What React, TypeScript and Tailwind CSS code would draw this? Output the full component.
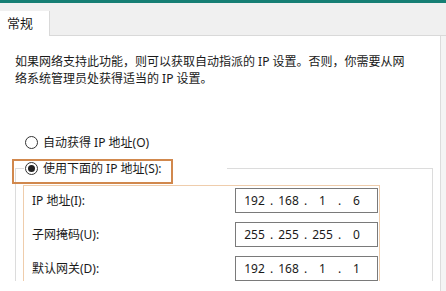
import React from "react";

const FONT = { fontFamily: '"Noto Sans", "Noto Sans CJK SC", sans-serif' };

function Radio({ checked }: { checked?: boolean }) {
  return (
    <span className="flex h-[13px] w-[13px] shrink-0 items-center justify-center rounded-full border border-[#333333] bg-white">
      {checked && <span className="h-[7px] w-[7px] rounded-full bg-[#222222]" />}
    </span>
  );
}

function IpBox({ parts }: { parts: string[] }) {
  return (
    <div className="flex h-[25px] w-[143px] items-center border border-[#7a7a7a] bg-white pl-[5px] text-[12px] text-[#1a1a1a]">
      {parts.map((p, i) => (
        <React.Fragment key={i}>
          <span className="w-[27px] text-center">{p}</span>
          {i < 3 && <span className="w-[7px] text-center">.</span>}
        </React.Fragment>
      ))}
    </div>
  );
}

const rows = [
  { label: "IP 地址(I):", parts: ["192", "168", "1", "6"] },
  { label: "子网掩码(U):", parts: ["255", "255", "255", "0"] },
  { label: "默认网关(D):", parts: ["192", "168", "1", "1"] },
];

export default function App() {
  return (
    <div className="h-[291px] w-[446px] overflow-hidden bg-[#f4f4f4] text-[#1a1a1a]" style={FONT}>
      {/* title bar edge */}
      <div className="h-[3px] bg-[#167f74]" />

      {/* tab strip */}
      <div className="flex h-[33px] items-end border-b border-[#d9d9d9] bg-[#f0f0f0]">
        <div className="-mb-px flex h-[25px] w-[50px] items-center border-r border-[#d9d9d9] bg-white pl-[7px] text-[13px]">
          常规
        </div>
      </div>

      <div className="flex">
        <div className="h-[260px] w-[441px] border-r border-[#dcdcdc] bg-white">
          <p className="whitespace-nowrap pl-[15px] pt-[17px] text-[12px] leading-[17px]">
            如果网络支持此功能，则可以获取自动指派的 IP 设置。否则，你需要从网
            <br />
            络系统管理员处获得适当的 IP 设置。
          </p>

          <div className="mt-[47px] flex h-[17px] items-center gap-[5px] pl-[25px] text-[12px]">
            <Radio />
            <span>自动获得 IP 地址(O)</span>
          </div>

          {/* group box */}
          <div className="relative mt-[9px] pl-[15px] pr-[7px]">
            <fieldset className="border-l border-r border-t border-[#dcdcdc]">
              <legend className="ml-[8px] flex h-[17px] w-[203px] items-center gap-[5px] bg-white pl-[1px] text-[12px]">
                <Radio checked />
                <span>使用下面的 IP 地址(S):</span>
              </legend>

              <div className="ml-[7px] mt-[8px] w-[357px] border-l border-r border-t border-[#efcdac] pt-[2px]">
                <div className="flex flex-col gap-[9px]">
                  {rows.map((r) => (
                    <div key={r.label} className="flex items-center justify-between pl-[8px] pr-px">
                      <span className="text-[12px]">{r.label}</span>
                      <IpBox parts={r.parts} />
                    </div>
                  ))}
                </div>
              </div>
            </fieldset>

            {/* highlight box over the option */}
            <div className="pointer-events-none absolute left-[12px] top-[-1px] h-[25px] w-[161px] border-[2.5px] border-[#d1884d]" />
          </div>
        </div>
      </div>
    </div>
  );
}
